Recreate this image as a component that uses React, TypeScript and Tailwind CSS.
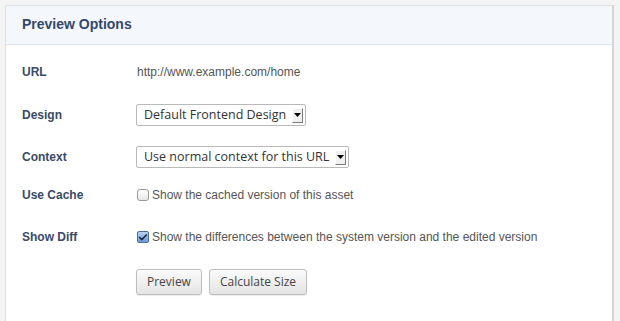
import { Check } from 'lucide-react'

const labelCls = 'w-[115px] shrink-0 text-[12px] font-bold text-[#3a4a68]'
const textFont = { fontFamily: '"Liberation Sans", Arial, sans-serif' }

// Fake select box that mimics the old Mac-style dropdown
function SelectBox({ value, width }: { value: string; width: string }) {
    return (
        <div
            className={`${width} h-[22px] flex items-center justify-between bg-white border border-[#b9b9b9] rounded-[2px] pl-[7px] pr-[2px] text-[12.5px] text-[#333]`}
            style={{ fontFamily: '"Open Sans", sans-serif' }}
        >
            <span className="leading-none">{value}</span>
            <span className="w-[11px] h-[15px] flex items-center justify-center bg-[#f0f0f0] border-t border-l border-t-white border-l-white border-r border-b border-r-[#7a7a7a] border-b-[#7a7a7a]">
                <svg width="7" height="4" viewBox="0 0 7 4">
                    <path d="M0 0h7L3.5 4z" fill="#000" />
                </svg>
            </span>
        </div>
    )
}

function Checkbox({ checked }: { checked?: boolean }) {
    return checked ? (
        <span className="w-[12px] h-[12px] rounded-[2px] border border-[#4a6d9c] bg-gradient-to-b from-[#b9d3f2] to-[#6d9bd6] flex items-center justify-center">
            <Check className="w-[11px] h-[11px] text-[#1c2a44]" strokeWidth={4} />
        </span>
    ) : (
        <span className="w-[12px] h-[12px] rounded-[3px] border border-[#9a9a9a] bg-gradient-to-b from-white to-[#e8e8e8]" />
    )
}

function Button({ children }: { children: React.ReactNode }) {
    return (
        <button
            className="h-[26px] px-[10px] rounded-[3px] border border-[#bdbdbd] bg-gradient-to-b from-[#fbfbfb] to-[#e4e4e4] text-[12px] text-[#444] shadow-[0_1px_1px_rgba(0,0,0,0.08)]"
            style={{ fontFamily: '"Open Sans", sans-serif' }}
        >
            {children}
        </button>
    )
}

export default function App() {
    return (
        <div className="w-[620px] h-[321px] bg-[#f4f4f4] pt-[5px] pl-[5px] overflow-hidden" style={textFont}>
            <div className="w-[609px] h-[330px] bg-white border-l border-t border-[#dcdfe4] border-r-2 border-r-[#d6d6d6]">

                {/* ===== HEADER ===== */}
                <div className="h-[39px] bg-[#f4f7fc] border-b border-[#dde3ec] flex items-center pl-[16px]">
                    <span className="text-[14px] font-bold text-[#34486b] pb-[2px]">Preview Options</span>
                </div>

                {/* ===== FORM ROWS ===== */}
                <div className="pl-[16px] pt-[7px]">
                    <div className="h-[40px] flex items-center">
                        <div className={labelCls}>URL</div>
                        <div className="text-[12px] text-[#555]">http://www.example.com/home</div>
                    </div>

                    <div className="h-[46px] flex items-center">
                        <div className="w-[114px] shrink-0 text-[12px] font-bold text-[#3a4a68]">Design</div>
                        <SelectBox value="Default Frontend Design" width="w-[170px]" />
                    </div>

                    <div className="h-[38px] flex items-center">
                        <div className="w-[114px] shrink-0 text-[12px] font-bold text-[#3a4a68]">Context</div>
                        <SelectBox value="Use normal context for this URL" width="w-[213px]" />
                    </div>

                    <div className="h-[38px] flex items-center">
                        <div className={labelCls}>Use Cache</div>
                        <label className="flex items-center gap-[3px] text-[12px] text-[#555]">
                            <Checkbox />
                            Show the cached version of this asset
                        </label>
                    </div>

                    <div className="h-[46px] flex items-center">
                        <div className={labelCls}>Show Diff</div>
                        <label className="flex items-center gap-[3px] text-[12px] text-[#555]">
                            <Checkbox checked />
                            Show the differences between the system version and the edited version
                        </label>
                    </div>

                    <div className="h-[44px] flex items-center pl-[114px] gap-[7px]">
                        <Button>Preview</Button>
                        <Button>Calculate Size</Button>
                    </div>
                </div>
            </div>
        </div>
    )
}
